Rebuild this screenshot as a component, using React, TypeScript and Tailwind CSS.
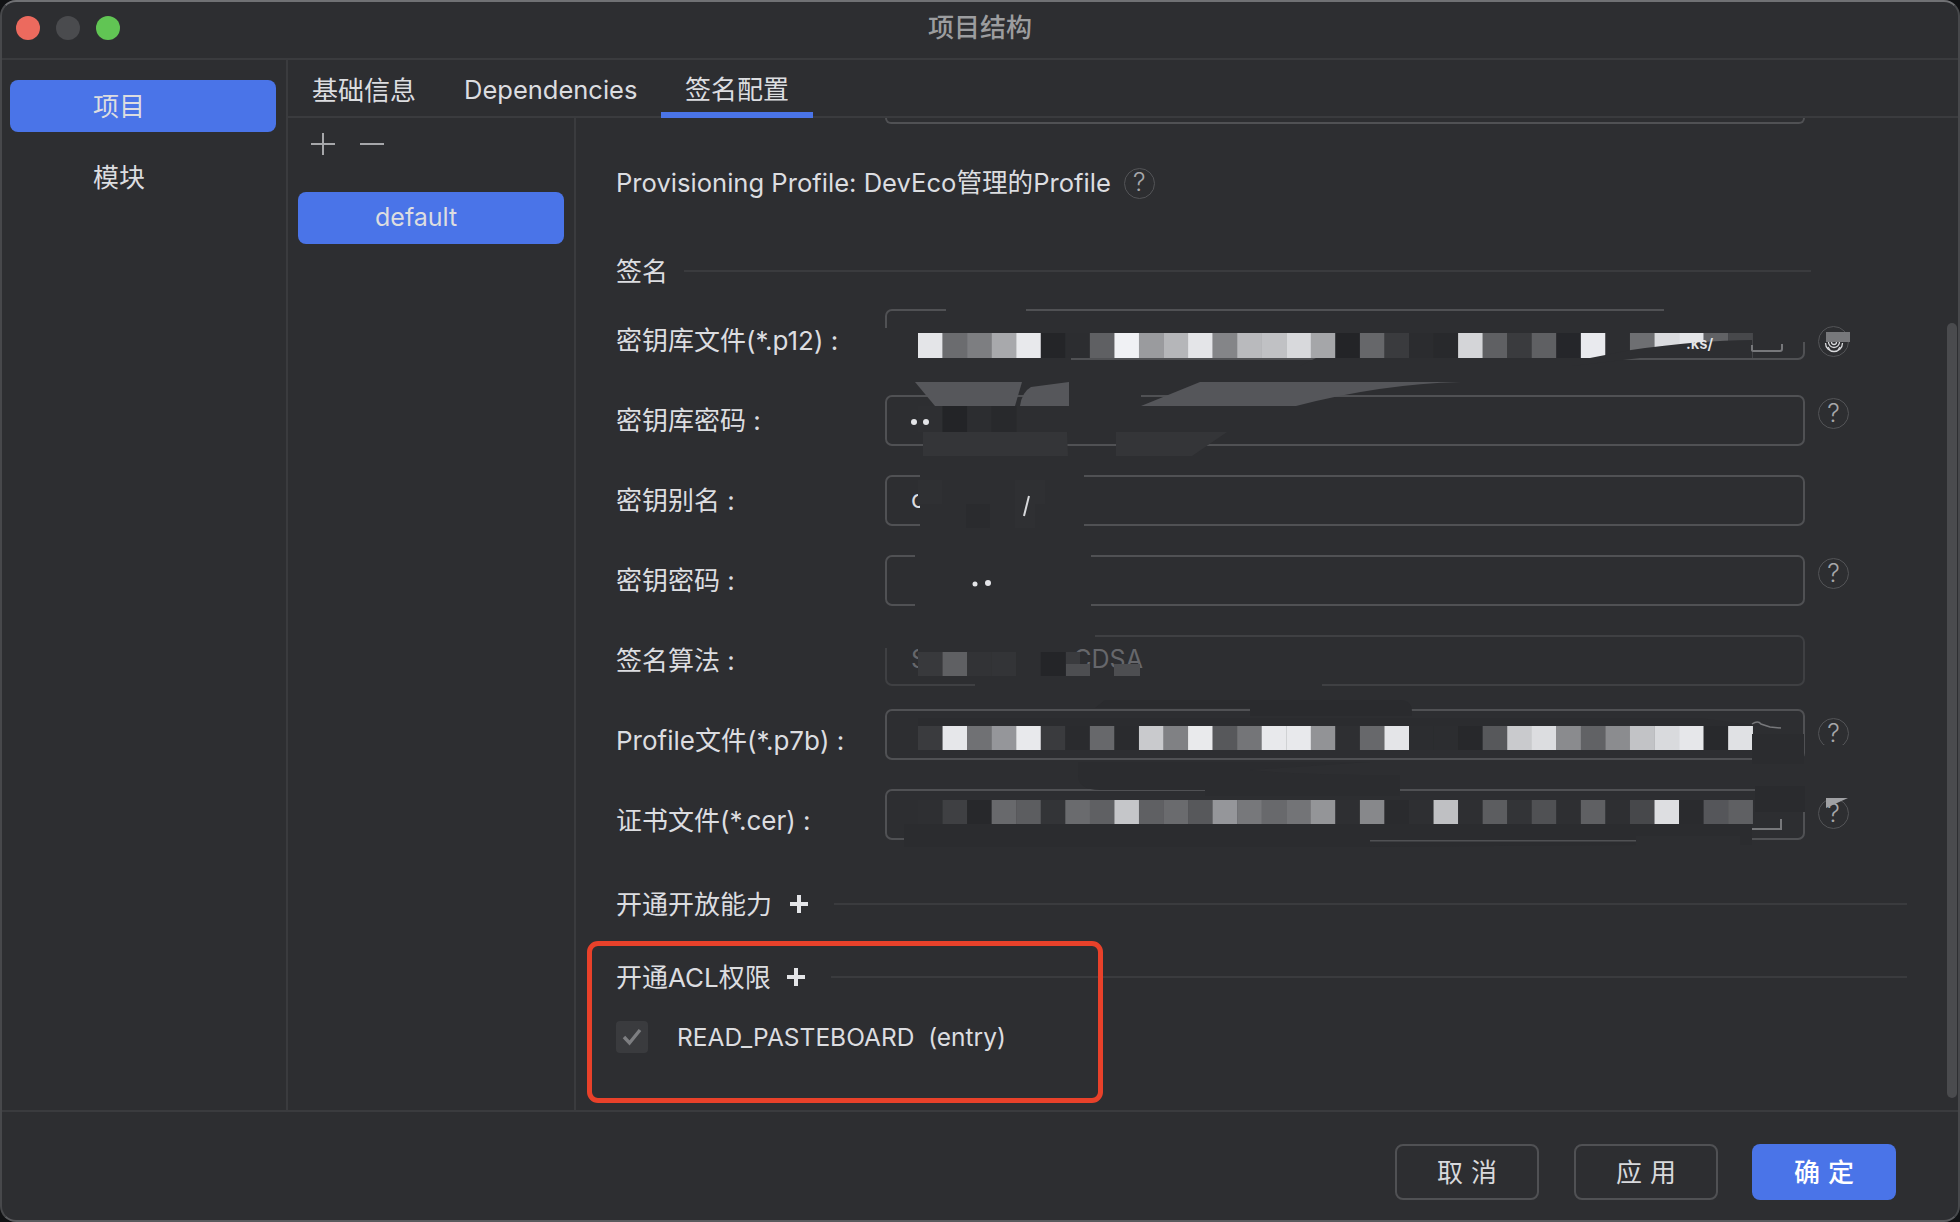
import React from "react";

const BG = "#2d2e31";

// the pixelated paths that are blurred out in the screenshot, one colour per block
const row1 = ["#e4e5e8", "#6b6c6f", "#7d7e81", "#a8a9ac", "#e8e9ec", "#242528", "#2c2d30", "#5f6063", "#f0f1f4", "#9a9b9e", "#b5b6b9", "#e4e5e8", "#848588", "#b9babd", "#c0c1c4", "#d8d9dc", "#a5a6a9", "#232427", "#66676a", "#3a3b3e", "#2b2c2f", "#28292c", "#d4d5d8", "#5f6063", "#3a3b3e", "#5f6063", "#25262a", "#e9eaee", "#2d2e31", "#6e6f72", "#dadbde", "#e4e5e8", "#616265", "#47484b"];
const row6 = ["#3a3b3e", "#e6e7ea", "#707174", "#95969a", "#e8e9ec", "#3a3b3e", "#2a2b2e", "#67686b", "#2a2b2e", "#c9cacd", "#808184", "#e9eaec", "#57585b", "#747578", "#e8e9ec", "#e8e9ec", "#929396", "#2e2f32", "#67686b", "#e4e5e8", "#2c2d30", "#2c2d30", "#27282b", "#57585b", "#c9cacd", "#dcdde0", "#8a8b8e", "#616265", "#8b8c8f", "#c2c3c6", "#d9dadd", "#e6e7ea", "#28292c", "#e0e1e4"];
const row7 = ["#2e2f32", "#3f4043", "#27282b", "#68696c", "#5c5d60", "#333437", "#6a6b6e", "#5f6063", "#c5c6c9", "#5f6063", "#6a6b6e", "#57585b", "#95969a", "#77787b", "#68696c", "#737477", "#949598", "#2e2f32", "#87888b", "#2a2b2e", "#2e2f32", "#bfc0c3", "#2e2f32", "#5c5d60", "#333437", "#505154", "#2e2f32", "#5f6063", "#2e2f32", "#47484b", "#dddee1", "#2a2b2e", "#55565a", "#5f6063"];
const row5 = ["#38393c", "#5f6063", "#323336", "#333437", "#2d2e31", "#242528"];
const row2 = ["#2e2f32", "#232427", "#2c2d30", "#28292c"];

function Blocks({ colors, y, h = 24 }: { colors: string[]; y: number; h?: number }) {
    return (
        <>
            {colors.map((c, i) => (
                <rect key={i} x={918 + i * 24.55} y={y} width={24.8} height={h} fill={c} />
            ))}
        </>
    );
}

function Redaction() {
    return (
        <svg className="absolute left-0 top-0 pointer-events-none" width={1960} height={1222} viewBox="0 0 1960 1222">
            {/* field 1 */}
            <rect x={946} y={306} width={80} height={10} fill={BG} />
            <rect x={1664} y={306} width={148} height={36} fill={BG} />
            <rect x={880} y={328} width={40} height={34} fill={BG} />
            <rect x={882} y={358} width={189} height={8} fill={BG} />
            <path d="M1316 358H1640L1572 366H1300Z" fill={BG} />
            <Blocks colors={row1} y={333} h={25} />
            <path d="M1680 358L1850 358V358H1752V340Q1700 340 1631 350L1590 358Z" fill={BG} />
            <text x={1686} y={349} fontSize={15} fontWeight={600} fill="#e4e5e8" fontFamily="Inter, sans-serif">.ks/</text>
            <path d="M1752 345V350Q1752 351 1754 351H1780Q1782 351 1782 349V344" fill="none" stroke="#77787b" strokeWidth={2} />
            <rect x={1826} y={332} width={24} height={10} fill="#77787b" />

            {/* field 2 */}
            <path d="M915 382H1022L1015 406H935Z" fill="#56575b" />
            <path d="M1031 387L1069 382V406H1020Q1022 392 1031 387Z" fill="#56575b" />
            <rect x={1069} y={390} width={72} height={10} fill={BG} />
            <path d="M1200 382H1350L1461 382Q1380 384 1296 406H1141Z" fill="#55565a" />
            <rect x={935} y={406} width={138} height={26} fill={BG} />
            <rect x={1075} y={406} width={180} height={26} fill={BG} />
            <Blocks colors={row2} y={406} h={26} />
            <circle cx={914} cy={422} r={3} fill="#e4e5e8" />
            <circle cx={926} cy={422} r={3} fill="#e4e5e8" />
            <path d="M923 432H1067L1068 456H923Z" fill="#343538" />
            <path d="M1116 432H1227L1192 456H1116Z" fill="#343538" />

            {/* field 3 */}
            <rect x={920} y={470} width={164} height={62} fill={BG} />
            <rect x={918} y={480} width={24} height={24} fill="#2f3033" />
            <rect x={966} y={504} width={24} height={24} fill="#2a2b2e" />
            <rect x={1015} y={504} width={20} height={24} fill="#2f3033" />
            <rect x={1015} y={480} width={30} height={24} fill="#2f3033" />
            <path d="M1029 496L1024 516" stroke="#d8d9dc" strokeWidth={2} fill="none" />

            {/* field 4 */}
            <rect x={915} y={550} width={176} height={60} fill={BG} />
            <circle cx={975} cy={584} r={2.5} fill="#e4e5e8" />
            <circle cx={988} cy={583} r={3} fill="#e4e5e8" />

            {/* field 5 */}
            <rect x={882} y={630} width={213} height={10} fill={BG} />
            <path d="M975 680H1322V690H975Z" fill={BG} />
            <rect x={884} y={634} width={34} height={14} fill={BG} />
            <rect x={918} y={645} width={158} height={35} fill={BG} />
            <Blocks colors={row5} y={652} />
            <rect x={1066} y={652} width={14} height={24} fill="#3a3b3e" />
            <rect x={1066} y={664} width={24} height={12} fill="#4d4e51" />
            <rect x={1114} y={664} width={26} height={12} fill="#4d4e51" />

            {/* field 6 */}
            <path d="M1105 700H1400Q1412 700 1412 712V716H1250V708H1095Z" fill="#2a2b2e" />
            <rect x={892} y={722} width={26} height={32} fill={BG} />
            <Blocks colors={row6} y={726} />
            <path d="M918 718H1700L1760 726H918Z" fill="#2b2c2f" />
            <rect x={1752} y={734} width={52} height={30} fill="#2b2c2f" />
            <rect x={1824} y={745} width={22} height={18} fill={BG} />
            <path d="M1752 760Q1758 756 1761 760L1770 763L1781 764" fill="none" stroke="#77787b" strokeWidth={1.5} transform="translate(0 -36)" />
            <path d="M1078 762H1370L1250 770Q1300 775 1400 775V790H1100Q1078 790 1078 775Z" fill="#2b2c2f" />
            <rect x={1205} y={786} width={195} height={10} fill="#2b2c2f" />

            {/* field 7 */}
            <rect x={892} y={796} width={26} height={30} fill={BG} />
            <Blocks colors={row7} y={800} />
            <rect x={1755} y={786} width={50} height={26} fill="#2a2b2e" />
            <path d="M904 824H1752V845H1640L1370 847H904Z" fill="#2b2c2f" />
            <rect x={1636} y={836} width={104} height={12} fill={BG} />
            <rect x={1370} y={840} width={266} height={1.5} fill="#505154" />
            <path d="M1752 829H1781V819" fill="none" stroke="#77787b" strokeWidth={2} />
            <path d="M1826 798H1848L1826 808Z" fill="#a0a1a4" />
        </svg>
    );
}

function Help({ fingerprint, hidden }: { fingerprint?: boolean; hidden?: boolean }) {
    if (hidden) return <div className="w-[31px] shrink-0" />;
    return (
        <div
            className={`flex h-[31px] w-[31px] shrink-0 items-center justify-center rounded-full border border-[#535457] text-[25px] font-light text-[#a6a7aa] ${
                fingerprint ? "mt-[3px]" : "mb-[13px]"
            }`}
        >
            {fingerprint ? (
                <svg width="24" height="24" viewBox="0 0 24 24" fill="none" stroke="#d8d9dc" strokeWidth="1.3">
                    <circle cx="12" cy="12" r="2.5" />
                    <circle cx="12" cy="12" r="5.5" />
                    <path d="M3.5 13a8.5 8.5 0 0 0 17 0" />
                    <path d="M6 17l2 3M18 17l-2 3" />
                </svg>
            ) : (
                "?"
            )}
        </div>
    );
}

interface RowProps {
    label: string;
    value?: string;
    help?: boolean;
    fingerprint?: boolean;
    dim?: boolean;
    fieldClass?: string;
}

function FormRow({ label, value, help, fingerprint, dim, fieldClass }: RowProps) {
    return (
        <div className="flex h-[80px] items-center">
            <div className="w-[269px] shrink-0 whitespace-pre text-[26px]">{label}</div>
            <div
                className={`flex h-[51px] w-[920px] shrink-0 items-center overflow-hidden rounded-[7px] border-2 pl-[24px] text-[25px] ${
                    dim ? "border-[#3f4043] text-[#66676b]" : "border-[#505154]"
                } ${fieldClass ?? ""}`}
            >
                {value}
            </div>
            <div className="ml-[13px]">
                <Help hidden={!help} fingerprint={fingerprint} />
            </div>
        </div>
    );
}

function SectionTitle({ title, plusClass, lineEnd }: { title: string; plusClass?: string; lineEnd: string }) {
    return (
        <div className={`flex items-center ${lineEnd}`}>
            <span className="text-[26px]">{title}</span>
            {plusClass && (
                <svg className={plusClass} width="20" height="20" viewBox="0 0 20 20">
                    <path d="M10 1v18M1 10h18" stroke="#e4e5e8" strokeWidth="4" />
                </svg>
            )}
            <div className={`h-[2px] flex-1 bg-[#3a3b3e] ${plusClass ? "ml-[25px]" : "ml-[16px]"}`} />
        </div>
    );
}

function FooterButton({ label, primary, className }: { label: string; primary?: boolean; className?: string }) {
    return (
        <button
            type="button"
            className={`flex h-[56px] w-[144px] items-center justify-center rounded-[8px] pl-[8px] text-[26px] tracking-[8px] ${
                primary ? "bg-[#4a74e8] font-medium text-white" : "border-2 border-[#505154] text-[#d8d9dc]"
            } ${className ?? ""}`}
        >
            {label}
        </button>
    );
}

export default function App() {
    return (
        <div className="relative h-[1222px] w-[1960px] overflow-hidden bg-[#111214] [font-family:Inter,'Noto_Sans_CJK_SC',sans-serif] text-[#dcdde0]">
            <div className="flex h-full flex-col overflow-hidden rounded-[16px] border-2 border-t-[#707174] border-x-[#47484b] border-b-[#5a5b5e] bg-[#2d2e31]">
                {/* title bar */}
                <div className="relative flex h-[58px] shrink-0 items-center border-b-2 border-[#3a3b3e] pb-[5px] pl-[14px]">
                    <div className="flex gap-[16px]">
                        <span className="h-[24px] w-[24px] rounded-full bg-[#ec6a5e]" />
                        <span className="h-[24px] w-[24px] rounded-full bg-[#4a4b4e]" />
                        <span className="h-[24px] w-[24px] rounded-full bg-[#61c554]" />
                    </div>
                    <div className="absolute inset-x-0 text-center text-[26px] font-medium text-[#9c9d9f]">项目结构</div>
                </div>

                <div className="flex min-h-0 flex-1">
                    {/* project / module list */}
                    <div className="w-[286px] shrink-0 border-r-2 border-[#3a3b3e] px-[8px] pt-[20px]">
                        <div className="flex h-[52px] w-[266px] items-center rounded-[8px] bg-[#4a74e8] pl-[83px] text-[26px]">项目</div>
                        <div className="mt-[19px] flex h-[52px] items-center pl-[83px] text-[26px]">模块</div>
                    </div>

                    <div className="flex min-w-0 flex-1 flex-col">
                        {/* tabs */}
                        <div className="flex h-[58px] shrink-0 items-end border-b-2 border-[#3a3b3e] pl-[24px]">
                            <div className="flex h-[58px] w-[152px] items-center pt-[6px] text-[26px]">基础信息</div>
                            <div className="flex h-[58px] w-[197px] items-center pt-[6px] text-[25.5px]">Dependencies</div>
                            <div className="relative top-[2px] flex h-[58px] w-[152px] items-center justify-center border-b-[6px] border-[#4a74e8] pt-[6px] text-[26px]">签名配置</div>
                        </div>

                        <div className="flex min-h-0 flex-1">
                            {/* signing config list */}
                            <div className="w-[288px] shrink-0 border-r-2 border-[#3a3b3e] pl-[10px]">
                                <div className="flex h-[74px] items-start gap-[25px] pl-[13px] pt-[14px] text-[#a6a7aa]">
                                    <svg width="24" height="24" viewBox="0 0 24 24" stroke="currentColor" strokeWidth="2">
                                        <path d="M12 1v22M0 12h24" />
                                    </svg>
                                    <svg width="24" height="24" viewBox="0 0 24 24" stroke="currentColor" strokeWidth="2">
                                        <path d="M0 12h24" />
                                    </svg>
                                </div>
                                <div className="flex h-[52px] w-[266px] items-center rounded-[8px] bg-[#4a74e8] pl-[77px] text-[25px]">default</div>
                            </div>

                            {/* form */}
                            <div className="relative min-w-0 flex-1 overflow-hidden pl-[40px]">
                                <div className="ml-[269px] h-[6px] w-[920px] rounded-b-[7px] border-x-2 border-b-2 border-[#505154]" />
                                <div className="mt-[34px] flex h-[50px] items-center text-[25.6px]">
                                    Provisioning Profile: DevEco管理的Profile
                                    <span className="ml-[13px] flex h-[31px] w-[31px] items-center justify-center rounded-full border border-[#535457] text-[25px] font-light text-[#a6a7aa]">?</span>
                                </div>
                                <div className="mt-[38px] w-[1195px]">
                                    <SectionTitle title="签名" lineEnd="h-[50px]" />
                                </div>
                                <div className="mt-[4px]">
                                    <FormRow label="密钥库文件(*.p12) :" help fingerprint fieldClass="mb-[12px]" />
                                    <FormRow label="密钥库密码 :" help />
                                    <FormRow label="密钥别名 :" value="c" />
                                    <FormRow label="密钥密码 :" help />
                                    <FormRow label="签名算法 :" value="SHA256withECDSA" dim />
                                    <FormRow label="Profile文件(*.p7b) :" help fieldClass="mb-[12px]" />
                                    <FormRow label="证书文件(*.cer) :" help fieldClass="mb-[12px]" />
                                </div>
                                <div className="mt-[21px] w-[1291px]">
                                    <SectionTitle title="开通开放能力" plusClass="ml-[17px]" lineEnd="h-[46px]" />
                                </div>
                                <div className="mt-[27px] w-[1291px]">
                                    <SectionTitle title="开通ACL权限" plusClass="ml-[15px]" lineEnd="h-[46px]" />
                                </div>
                                <div className="mt-[19px] flex items-center">
                                    <span className="flex h-[32px] w-[32px] items-center justify-center rounded-[4px] bg-[#3a3b3e]">
                                        <svg width="20" height="18" viewBox="0 0 20 18" fill="none" stroke="#7d7e81" strokeWidth="3.4">
                                            <path d="M2 9l5.5 6L18 2" />
                                        </svg>
                                    </span>
                                    <span className="ml-[29px] whitespace-pre text-[24.5px]">READ_PASTEBOARD  (entry)</span>
                                </div>
                                {/* scrollbar */}
                                <div className="absolute right-[1px] top-[205px] h-[775px] w-[10px] rounded-full bg-[#4a4b4e]" />
                            </div>
                        </div>
                    </div>
                </div>

                {/* footer */}
                <div className="flex h-[110px] shrink-0 items-start justify-end gap-[34px] border-t-2 border-[#3a3b3e] pr-[62px] pt-[32px]">
                    <FooterButton label="取消" className="mr-[1px]" />
                    <FooterButton label="应用" />
                    <FooterButton label="确定" primary />
                </div>
            </div>

            <Redaction />
            {/* annotation drawn on top of the screenshot */}
            <div className="absolute left-[587px] top-[941px] h-[162px] w-[516px] rounded-[11px] border-[5px] border-[#e8412a] pointer-events-none" />
        </div>
    );
}
